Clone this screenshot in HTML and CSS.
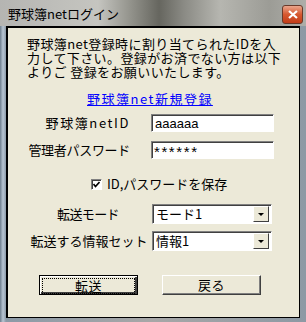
FILE: index.html
```html
<!DOCTYPE html>
<html lang="ja">
<head>
  <meta charset="UTF-8" />
  <title>野球簿netログイン</title>
  <link rel="stylesheet" href="styles.css">
</head>
<body>
  <div class="window">
    <div class="titlebar">
      <span class="title">野球簿netログイン</span>
      <span class="close-btn">
        <svg width="10" height="9" viewBox="0 0 10 9"><path d="M1 1 L9 8 M9 1 L1 8" stroke="#fff" stroke-width="2.2"/></svg>
      </span>
    </div>

    <div class="panel">
      <p class="intro">野球簿net登録時に割り当てられたIDを入<br>力して下さい。登録がお済でない方は以下<br>よりご 登録をお願いいたします。</p>

      <a href="#" class="signup-link">野球簿net新規登録</a>

      <div class="form-row row-id">
        <label class="field-label">野球簿netID</label>
        <input class="text-box" type="text" value="aaaaaa">
      </div>
      <div class="form-row row-pass">
        <label class="field-label">管理者パスワード</label>
        <div class="text-box pass">******</div>
      </div>

      <div class="check-row">
        <span class="check-box">
          <svg width="7" height="7" viewBox="0 0 7 7"><path d="M0.5 3 L2.5 5.5 L6.5 1" stroke="#000" stroke-width="1.6" fill="none"/></svg>
        </span>
        <span>ID,パスワードを保存</span>
      </div>

      <div class="form-row row-mode">
        <label class="field-label">転送モード</label>
        <div class="combo"><span class="combo-text">モード1</span><span class="combo-arrow"></span></div>
      </div>
      <div class="form-row row-set">
        <label class="field-label">転送する情報セット</label>
        <div class="combo"><span class="combo-text">情報1</span><span class="combo-arrow"></span></div>
      </div>

      <div class="button-row">
        <button class="win-btn default"><span class="focus">転送</span></button>
        <button class="win-btn">戻る</button>
      </div>
    </div>
  </div>
</body>
</html>
```

FILE: styles.css
```css
body {
  margin: 0;
  font-family: "Noto Sans CJK JP", "Liberation Sans", sans-serif;
  font-size: 13px;
  color: #000;
  background: #9aa6b2;
}
.window {
  width: 306px;
  height: 322px;
  background: linear-gradient(to right, #6d7d8c 0, #b9c6d3 3px, #8c9aa7 6px, #a7a7a7 50%, #8d99a4 100%);
  display: flex;
  flex-direction: column;
}
.titlebar {
  height: 27px;
  display: flex;
  align-items: center;
  justify-content: space-between;
  padding: 0 3px 0 8px;
  background: linear-gradient(to right, #b5b5b2 0, #c5c5c0 32%, #96968f 42%, #66665f 52%, #8a8a84 60%, #b6b6b0 72%, #9c9c96 88%, #aeaea9 100%);
}
.title {
  line-height: 14px;
  margin-top: 1px;
}
.close-btn {
  width: 19px;
  height: 17px;
  margin-top: 3px;
  border: 1px solid #6a3a2a;
  border-radius: 3px;
  background: linear-gradient(#eaa58c, #d6582f 50%, #c23c18);
  display: flex;
  align-items: center;
  justify-content: center;
}
.panel {
  margin: 0 6px 4px 6px;
  height: 289px;
  border: 1px solid #000;
  border-top-width: 2px;
  border-left-width: 2px;
  background: #ece9d8;
  padding: 9px 0 0 19px;
  display: flex;
  flex-direction: column;
}
.intro {
  margin: 0;
  line-height: 14px;
  letter-spacing: 0.4px;
  white-space: nowrap;
}
.signup-link {
  align-self: flex-start;
  margin: 13px 0 0 60px;
  color: #0000ff;
  line-height: 14px;
  letter-spacing: 1.5px;
}
.form-row {
  display: flex;
  align-items: center;
}
.field-label {
  width: 124px;
  box-sizing: border-box;
  text-align: center;
  line-height: 14px;
  white-space: nowrap;
}
.row-id .field-label,
.row-pass .field-label {
  text-align: right;
  padding-right: 21px;
}
.row-id .field-label { letter-spacing: 1.6px; }
.row-pass .field-label { letter-spacing: -0.3px; }
.row-mode .field-label { letter-spacing: -0.6px; padding-right: 2px; }
.row-id { margin-top: 8px; }
.row-pass { margin-top: 9px; }
.text-box {
  width: 123px;
  height: 18px;
  box-sizing: border-box;
  margin: 0;
  padding: 0 3px;
  border: 1px solid;
  border-color: #808080 #fff #fff #808080;
  box-shadow: inset 1px 1px 0 #404040;
  background: #fff;
  font-family: "Liberation Sans", sans-serif;
  font-size: 13px;
  color: #000;
}
.text-box.pass {
  font-size: 15px;
  line-height: 12px;
  padding: 4px 2px 0;
  letter-spacing: 1.6px;
}
.check-row {
  display: flex;
  align-items: center;
  gap: 5px;
  margin: 18px 0 0 64px;
  line-height: 14px;
}
.check-box {
  width: 9px;
  height: 9px;
  border: 1px solid;
  border-color: #808080 #fff #fff #808080;
  box-shadow: inset 1px 1px 0 #404040;
  background: #fff;
  display: flex;
  align-items: center;
  justify-content: center;
}
.row-mode { margin-top: 13px; }
.row-set { margin-top: 7px; }
.combo {
  width: 120px;
  height: 20px;
  box-sizing: border-box;
  margin-left: 1px;
  border: 1px solid;
  border-color: #808080 #fff #fff #808080;
  box-shadow: inset 1px 1px 0 #404040;
  background: #fff;
  display: flex;
  align-items: center;
  justify-content: space-between;
  padding: 1px 2px 1px 3px;
}
.combo-text {
  line-height: 14px;
}
.combo-arrow {
  width: 16px;
  height: 16px;
  box-sizing: border-box;
  border: 1px solid;
  border-color: #fff #404040 #404040 #fff;
  background: #ece9d8;
  position: relative;
}
.combo-arrow::after {
  content: "";
  position: absolute;
  left: 4px;
  top: 6px;
  border-left: 3px solid transparent;
  border-right: 3px solid transparent;
  border-top: 3px solid #000;
}
.button-row {
  display: flex;
  gap: 24px;
  margin: 24px 0 0 12px;
}
.win-btn {
  width: 99px;
  height: 20px;
  margin: 0;
  padding: 0;
  box-sizing: border-box;
  background: #ece9d8;
  border: 1px solid;
  border-color: #fff #404040 #404040 #fff;
  box-shadow: inset -1px -1px 0 #808080;
  font-family: "Noto Sans CJK JP", sans-serif;
  font-size: 13px;
  line-height: 14px;
  letter-spacing: 0.5px;
  color: #000;
}
.win-btn.default {
  border: 1px solid #000;
  box-shadow: inset 1px 1px 0 #fff, inset -2px -2px 0 #404040;
  padding: 2px;
}
.focus {
  display: block;
  height: 14px;
  border: 1px dotted #000;
  line-height: 14px;
}
```
